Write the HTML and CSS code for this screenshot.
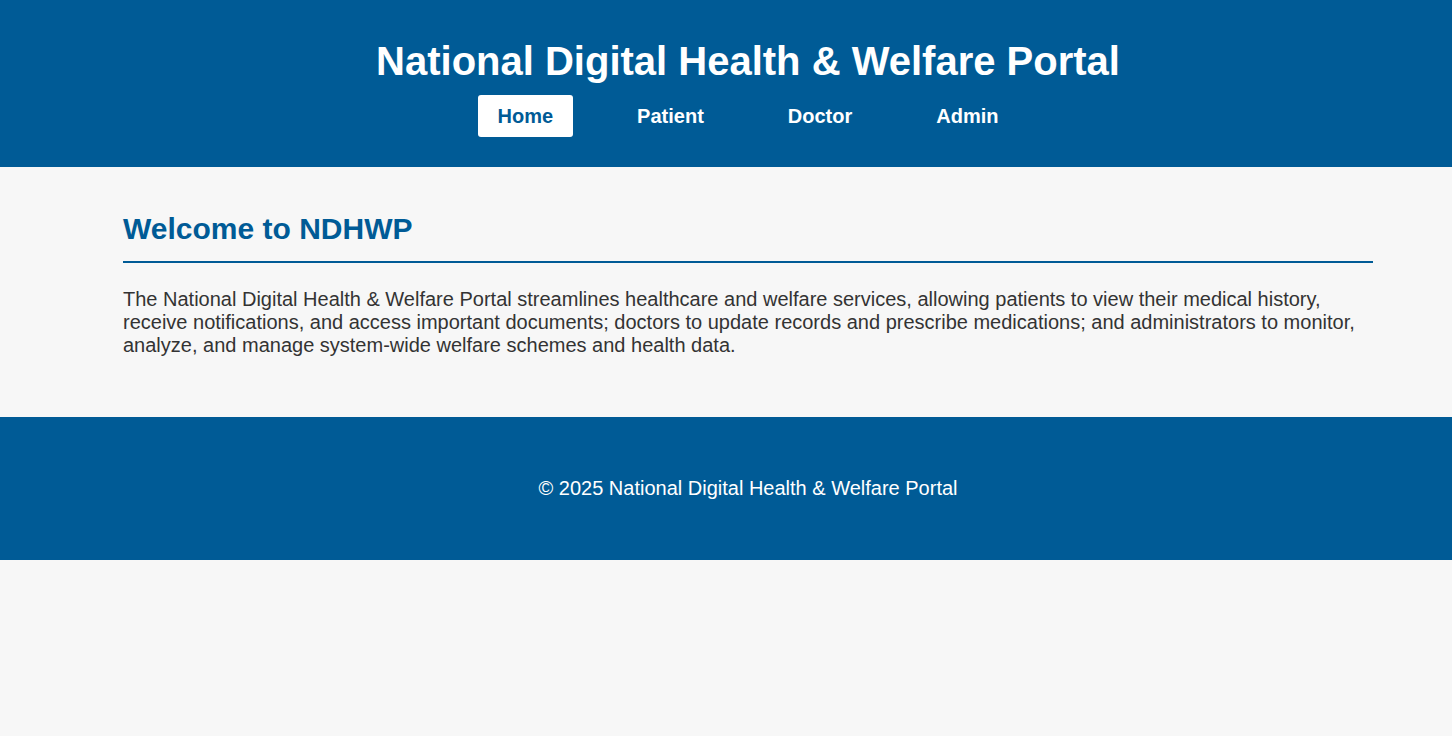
FILE: index.html
```html
<!DOCTYPE html>
<html lang="en">
<head>
<meta charset="utf-8">
<meta name="viewport" content="width=device-width, initial-scale=1">
<title>National Digital Health &amp; Welfare Portal</title>
<link rel="stylesheet" href="styles.css">
</head>
<body>
<header class="site-header">
  <h1 class="site-title">National Digital Health &amp; Welfare Portal</h1>
  <nav class="site-nav">
    <a class="nav-link active" href="#home">Home</a>
    <a class="nav-link" href="#patient">Patient</a>
    <a class="nav-link" href="#doctor">Doctor</a>
    <a class="nav-link" href="#admin">Admin</a>
  </nav>
</header>
<main class="content">
  <section class="welcome" id="home">
    <h2 class="section-title">Welcome to NDHWP</h2>
    <p class="intro">The National Digital Health &amp; Welfare Portal streamlines healthcare and welfare services, allowing patients to view their medical history, receive notifications, and access important documents; doctors to update records and prescribe medications; and administrators to monitor, analyze, and manage system-wide welfare schemes and health data.</p>
  </section>
</main>
<footer class="site-footer">
  <p class="copyright">© 2025 National Digital Health &amp; Welfare Portal</p>
</footer>
</body>
</html>
```
FILE: styles.css
```css
* {
  box-sizing: border-box;
}

body {
  margin: 0;
  background: #f7f7f7;
  color: #333;
  font-family: Arial, "Liberation Sans", sans-serif;
  font-size: 20px;
  line-height: 23px;
}

.site-header,
.site-footer {
  padding-right: 20px;
  padding-left: 64px;
  background: #005b96;
  color: #fff;
  text-align: center;
}

.site-header {
  padding-top: 38px;
  padding-bottom: 30px;
}

.site-title {
  margin: 0 0 11px;
  font-size: 40px;
  line-height: 46px;
}

.site-nav {
  display: flex;
  flex-wrap: wrap;
  justify-content: center;
  gap: 10px 44px;
}

.nav-link {
  padding: 10px 20px 9px;
  border-radius: 3px;
  color: #fff;
  font-weight: bold;
  text-decoration: none;
}

.nav-link.active {
  background: #fff;
  color: #005b96;
}

.content {
  padding: 40px 20px 60px 64px;
}

.welcome {
  max-width: 1250px;
  margin: 0 auto;
}

.section-title {
  margin: 0 0 25px;
  padding-bottom: 10px;
  border-bottom: 2px solid #005b96;
  color: #005b96;
  font-size: 30px;
  line-height: 44px;
}

.intro {
  margin: 0;
}

.site-footer {
  padding-top: 60px;
  padding-bottom: 60px;
}

.copyright {
  margin: 0;
}
```
